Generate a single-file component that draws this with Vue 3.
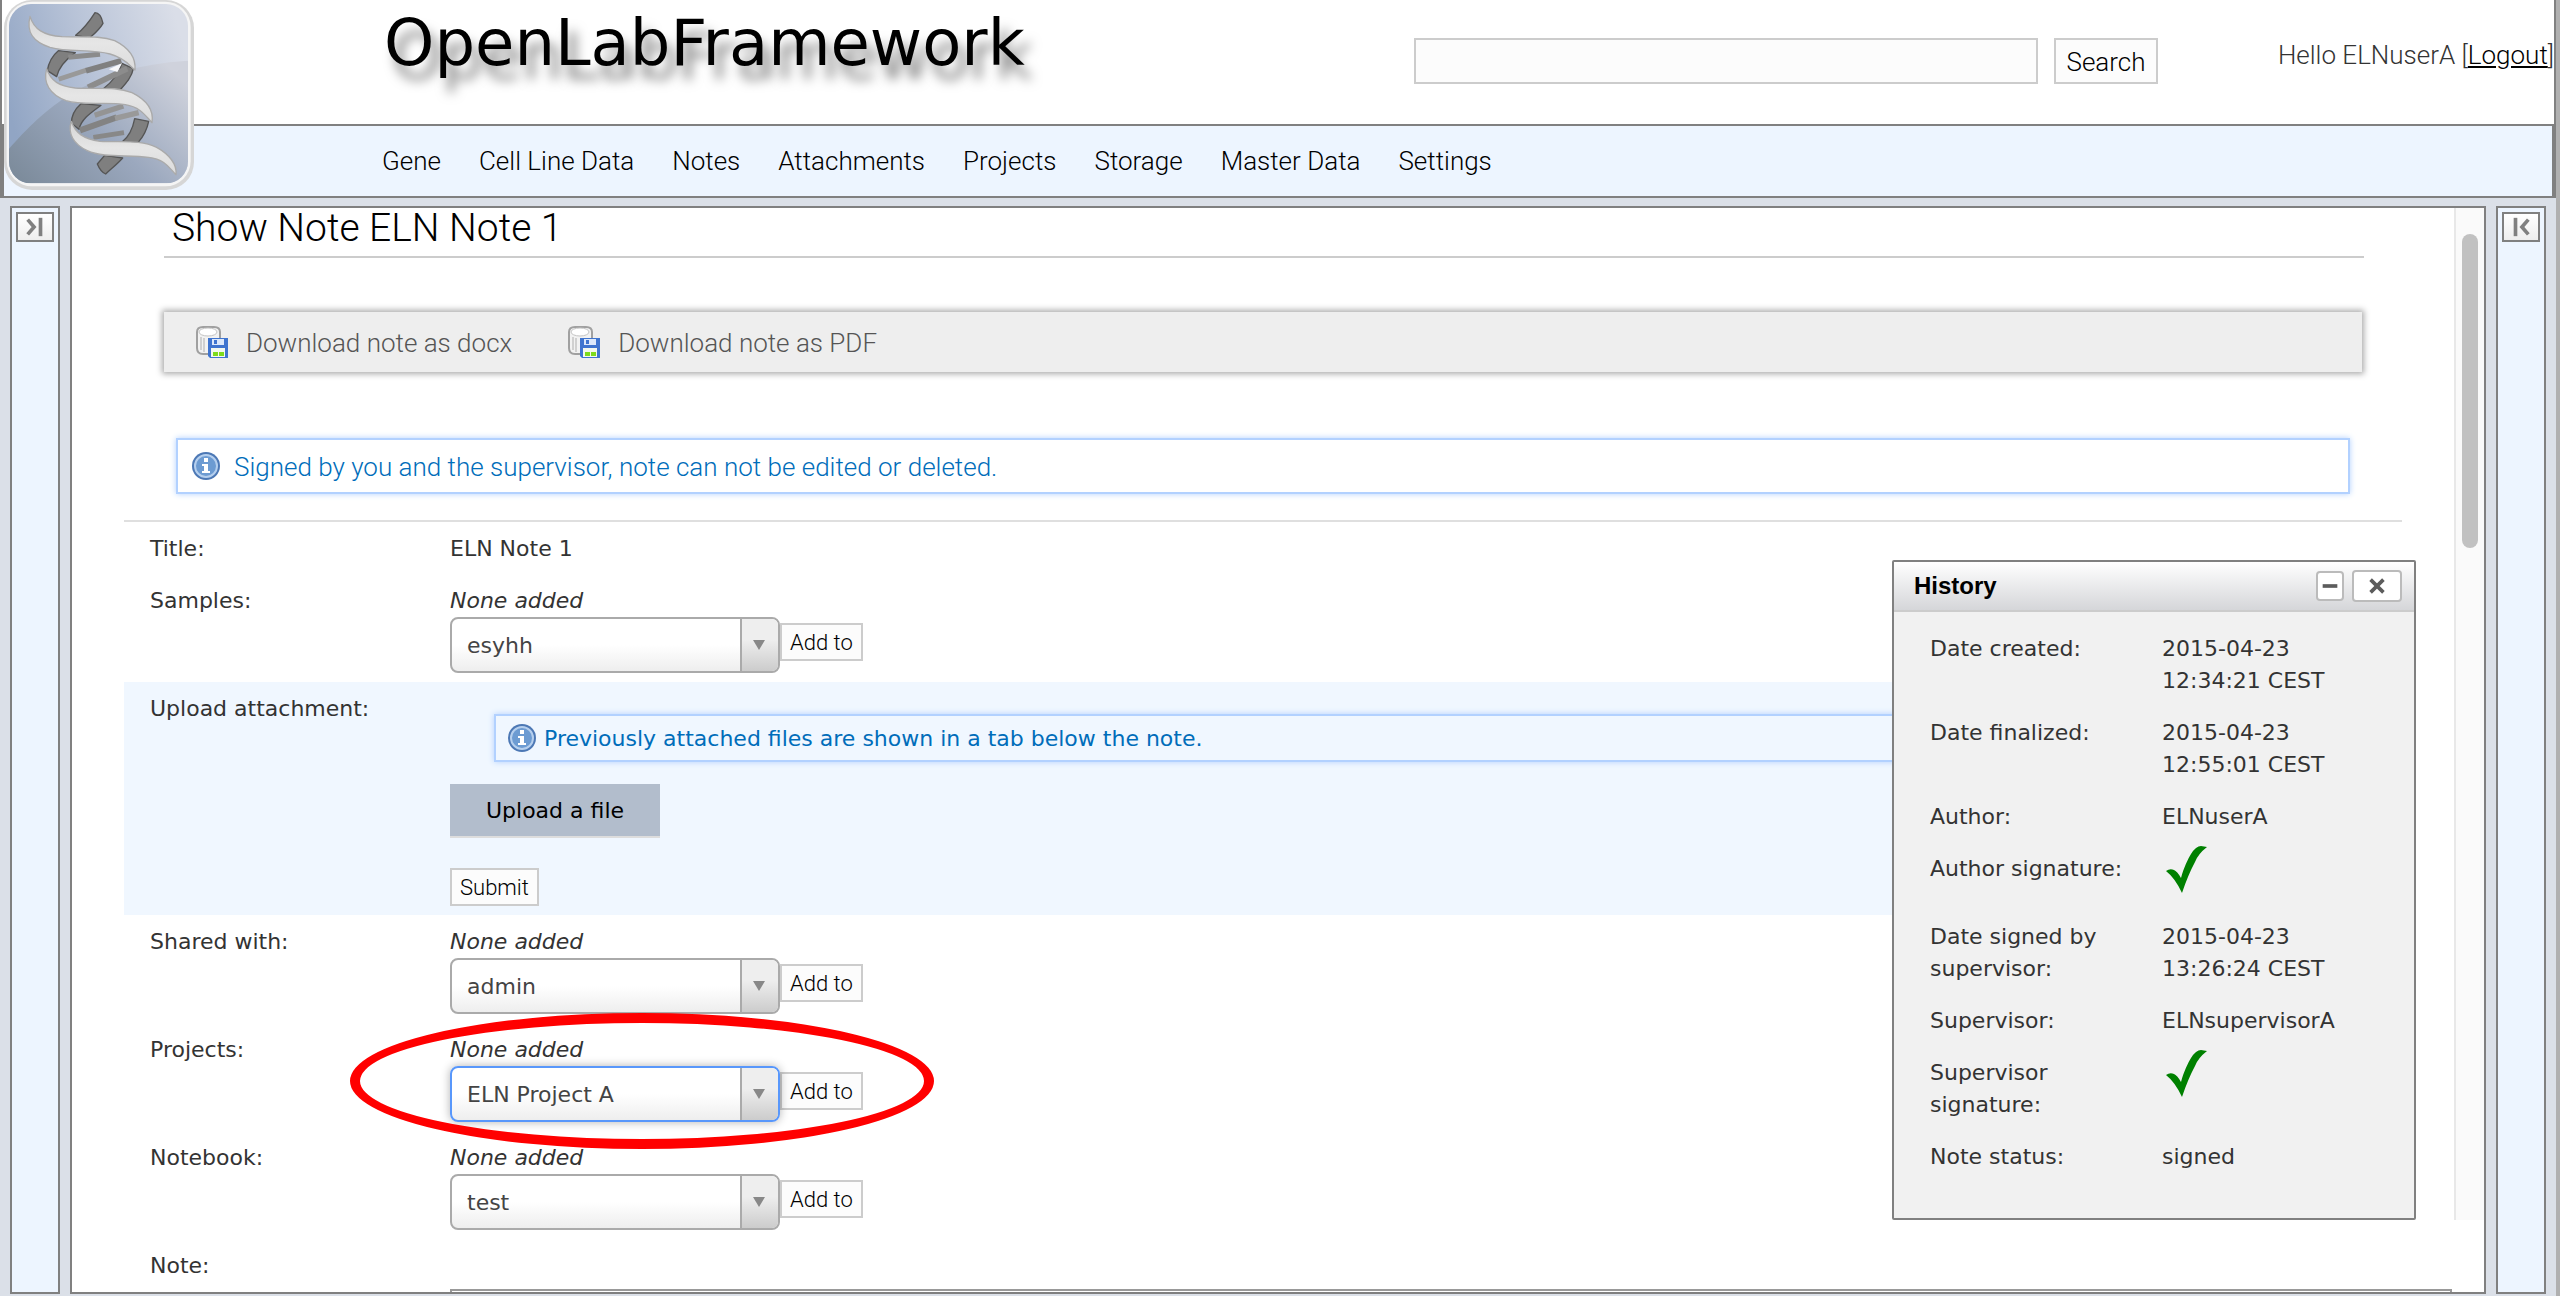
<script setup>
import { ref } from 'vue';

const menu = ['Gene', 'Cell Line Data', 'Notes', 'Attachments', 'Projects', 'Storage', 'Master Data', 'Settings'];

const downloads = ['Download note as docx', 'Download note as PDF'];

// Rows above and below the attachment row share the same picker layout
const samples = [{ id: 'samples', label: 'Samples:', value: 'esyhh' }];
const links = [
  { id: 'shared', label: 'Shared with:', value: 'admin' },
  { id: 'projects', label: 'Projects:', value: 'ELN Project A', active: true },
  { id: 'notebook', label: 'Notebook:', value: 'test' },
];

const history = [
  { label: 'Date created:', value: '2015-04-23 12:34:21 CEST' },
  { label: 'Date finalized:', value: '2015-04-23 12:55:01 CEST' },
  { label: 'Author:', value: 'ELNuserA' },
  { label: 'Author signature:', check: true },
  { label: 'Date signed by supervisor:', value: '2015-04-23 13:26:24 CEST' },
  { label: 'Supervisor:', value: 'ELNsupervisorA' },
  { label: 'Supervisor signature:', check: true },
  { label: 'Note status:', value: 'signed' },
];

const query = ref('');
</script>

<template>
  <div class="app">
    <header class="header">
      <div class="banner">
        <h1 class="brand">OpenLabFramework</h1>
        <form class="search" @submit.prevent>
          <input v-model="query" type="text" class="search-input" aria-label="Search" />
          <button type="submit" class="search-button">Search</button>
        </form>
        <div class="user">Hello ELNuserA [<a href="#">Logout</a>]</div>
      </div>
      <nav class="menu">
        <a v-for="item in menu" :key="item" href="#">{{ item }}</a>
      </nav>
      <svg class="logo" viewBox="0 0 600 600" aria-hidden="true">
        <defs>
          <linearGradient id="tile" x1="0" y1="0.6" x2="1" y2="0.3">
            <stop offset="0" stop-color="#91a5c4" />
            <stop offset="0.5" stop-color="#b9c4d8" />
            <stop offset="1" stop-color="#dadee8" />
          </linearGradient>
          <linearGradient id="hill" x1="0" y1="0.9" x2="1" y2="0.2">
            <stop offset="0" stop-color="#7c8b9b" />
            <stop offset="0.5" stop-color="#9ba8be" />
            <stop offset="1" stop-color="#cfd2dc" />
          </linearGradient>
          <linearGradient id="strand" x1="0" y1="0" x2="0" y2="1">
            <stop offset="0" stop-color="#d6d6d6" />
            <stop offset="0.5" stop-color="#e6e6e6" />
            <stop offset="1" stop-color="#dcdcdc" />
          </linearGradient>
          <clipPath id="tile-clip"><rect x="27" y="12" width="537" height="538" rx="66" /></clipPath>
        </defs>
        <rect x="12" y="0" width="570" height="570" rx="84" fill="#d6d6d6" />
        <rect x="20" y="5" width="552" height="554" rx="76" fill="#f5f5f5" />
        <g clip-path="url(#tile-clip)">
          <rect x="27" y="12" width="537" height="538" fill="url(#tile)" />
          <path d="M27 446C130 330 260 200 564 182V550H27Z" fill="url(#hill)" />
        </g>
        <!-- back strand -->
        <g fill="#7f7f7f" stroke="#555" stroke-width="4" stroke-linejoin="round">
          <path d="M227 106C252 86 270 62 285 38Q302 38 309 70C298 90 280 104 268 114Z" />
          <path d="M175 152C158 166 146 186 142 212L170 230C176 204 198 178 226 158Z" />
          <path d="M400 206C395 232 378 250 360 270L310 266C336 246 356 222 366 190Z" />
          <path d="M243 311C226 326 214 344 214 370L237 388C244 356 276 336 303 316Z" />
          <path d="M446 364C440 394 428 412 414 428L366 426C388 410 398 388 404 356Z" />
          <path d="M314 466L292 492Q302 516 317 522C334 506 352 492 368 474Z" />
        </g>
        <!-- rungs -->
        <g fill="none" stroke-linecap="butt">
          <path d="M205 172L300 163" stroke="#8b8b8b" stroke-width="15" />
          <path d="M176 238L260 210" stroke="#999" stroke-width="14" />
          <path d="M258 212L364 182" stroke="#808080" stroke-width="17" />
          <path d="M264 262L382 206" stroke="#8c8c8c" stroke-width="17" />
          <path d="M326 208L366 190L352 216Z" fill="#f7f8fb" />
          <path d="M284 346L370 318" stroke="#949494" stroke-width="16" />
          <path d="M240 391L350 352" stroke="#838383" stroke-width="18" />
          <path d="M345 355L416 338" stroke="#999" stroke-width="16" />
          <path d="M280 412L372 398" stroke="#888" stroke-width="14" />
        </g>
        <!-- front strand -->
        <g fill="url(#strand)" stroke="#aaa" stroke-width="4" stroke-linejoin="round">
          <path d="M90 49C102 88 130 106 186 110C250 112 300 106 344 122C388 144 408 176 405 210C392 202 380 176 330 162C270 146 210 158 150 142C100 126 78 98 90 49Z" />
          <path d="M140 206C152 244 178 258 226 264C290 268 346 258 396 278C440 300 462 330 456 368C438 350 424 322 376 314C320 304 250 318 198 302C150 284 128 250 140 206Z" />
          <path d="M214 364C226 400 250 416 300 424C364 428 420 418 470 442C506 462 532 492 528 524C510 508 498 478 446 472C380 464 310 474 262 452C220 432 202 400 214 364Z" />
        </g>
      </svg>
    </header>

    <div class="workspace">
      <aside class="side left">
        <button type="button" class="toggle" aria-label="Expand left panel">
          <svg viewBox="0 0 24 24"><path d="M4 4l7 8-7 8" /><path d="M18 2v20" /></svg>
        </button>
      </aside>

      <main class="main">
        <div class="content">
          <h2 class="title">Show Note ELN Note 1</h2>

          <div class="toolbar">
            <a v-for="item in downloads" :key="item" href="#">
              <svg class="disk" viewBox="0 0 32 32" aria-hidden="true">
                <path d="M1 6Q1 1 7 1h11q6 0 6 5v16q0 6-6 6H7q-6 0-6-6Z" fill="#f2f2f2" stroke="#a0a0a0" stroke-width="2" />
                <ellipse cx="12" cy="6" rx="9" ry="4" fill="#fff" stroke="#c4c4c4" />
                <path d="M5 11v13M8 12v14" stroke="#d0d0d0" stroke-width="2" />
                <path d="M12 12h20v20H14l-2-2Z" fill="#3f74cf" />
                <path d="M16 13h12v6H16Z" fill="#dce8fb" />
                <path d="M18 14h3v4h-3Z" fill="#3f74cf" />
                <path d="M15 22h14v9H15Z" fill="#f4f8ee" />
                <path d="M17 26h5v4h-5zM23 26h5v4h-5z" fill="#7ddb1c" />
              </svg>
              <span>{{ item }}</span>
            </a>
          </div>

          <div class="message signed">
            <svg class="info" viewBox="0 0 28 28" aria-hidden="true">
              <circle cx="14" cy="14" r="14" fill="#4c78b5" />
              <circle cx="14" cy="14" r="11" fill="#6c9bd2" stroke="#b5cfee" stroke-width="2" />
              <path d="M12 6h4v4h-4zM10 12h6v7h2v2h-8v-2h2v-5h-2z" fill="#fff" />
            </svg>
            <span>Signed by you and the supervisor, note can not be edited or deleted.</span>
          </div>

          <div class="details">
            <div class="row">
              <span class="label">Title:</span>
              <div class="value">ELN Note 1</div>
            </div>

            <div v-for="field in samples" :key="field.id" class="row">
              <label class="label" :for="field.id">{{ field.label }}</label>
              <div class="value">
                <em>None added</em>
                <div class="picker">
                  <span class="select">
                    <select :id="field.id"><option>{{ field.value }}</option></select>
                  </span>
                  <button type="button" class="small-button">Add to</button>
                </div>
              </div>
            </div>

            <div class="row shaded">
              <span class="label">Upload attachment:</span>
              <div class="value">
                <div class="message attached">
                  <svg class="info" viewBox="0 0 28 28" aria-hidden="true">
                    <circle cx="14" cy="14" r="14" fill="#4c78b5" />
                    <circle cx="14" cy="14" r="11" fill="#6c9bd2" stroke="#b5cfee" stroke-width="2" />
                    <path d="M12 6h4v4h-4zM10 12h6v7h2v2h-8v-2h2v-5h-2z" fill="#fff" />
                  </svg>
                  <span>Previously attached files are shown in a tab below the note.</span>
                </div>
                <button type="button" class="upload">Upload a file</button>
                <button type="submit" class="small-button">Submit</button>
              </div>
            </div>

            <div v-for="field in links" :key="field.id" class="row">
              <label class="label" :for="field.id">{{ field.label }}</label>
              <div class="value">
                <em>None added</em>
                <div class="picker">
                  <span class="select" :class="{ active: field.active }">
                    <select :id="field.id"><option>{{ field.value }}</option></select>
                  </span>
                  <button type="button" class="small-button">Add to</button>
                </div>
              </div>
              <span v-if="field.active" class="highlight"></span>
            </div>

            <div class="row">
              <label class="label" for="note">Note:</label>
              <div class="value note-value">
                <textarea id="note" class="note"></textarea>
              </div>
            </div>
          </div>
        </div>
        <div class="scrollbar"><div class="thumb"></div></div>

        <section class="history">
          <div class="history-header">
            <h3>History</h3>
            <button type="button" class="minimize" aria-label="Minimize">
              <svg viewBox="0 0 24 24"><path d="M4 12h16" /></svg>
            </button>
            <button type="button" class="close" aria-label="Close">
              <svg viewBox="0 0 24 24"><path d="M5 5l14 14M19 5L5 19" /></svg>
            </button>
          </div>
          <dl>
            <div v-for="entry in history" :key="entry.label" class="entry">
              <dt>{{ entry.label }}</dt>
              <dd>
                <svg v-if="entry.check" class="check" viewBox="0 0 48 48" role="img" aria-label="yes">
                  <path d="M4 18Q8 15 12 17Q15 18 19 25C22 14 26 6 29 1Q34 -7 39 -7L45 -6Q36 1 33 9Q26 22 20 40Q13 25 4 18Z" fill="#008000" />
                </svg>
                <template v-else>{{ entry.value }}</template>
              </dd>
            </div>
          </dl>
        </section>
      </main>

      <aside class="side right">
        <button type="button" class="toggle" aria-label="Expand right panel">
          <svg viewBox="0 0 24 24"><path d="M20 4l-7 8 7 8" /><path d="M6 2v20" /></svg>
        </button>
      </aside>
    </div>
  </div>
</template>

<style>
body {
  margin: 0;
  background: #b0b0b0;
}
</style>

<style scoped>
.app {
  --line: #808080;
  --thin: Roboto, "Liberation Sans", sans-serif;
  --wide: "DejaVu Sans", Verdana, sans-serif;
  display: flex;
  flex-direction: column;
  box-sizing: border-box;
  height: 100vh;
  margin-right: 4px;
  overflow: hidden;
  background: #dbe0e8;
  color: #333;
  font-family: var(--wide);
  font-size: 22px;
  line-height: 32px;
}

.app button,
.app input,
.app select,
.app textarea {
  box-sizing: border-box;
  margin: 0;
  padding: 0;
  border-radius: 0;
}

.header {
  position: relative;
  border-left: 2px solid var(--line);
  border-right: 2px solid var(--line);
}

.logo {
  position: absolute;
  top: 0;
  left: -2px;
  width: 200px;
  height: 200px;
}

.banner {
  display: flex;
  align-items: flex-start;
  height: 124px;
  background: #fff;
}

.brand {
  flex: 1;
  margin: 0;
  padding-left: 382px;
  color: #000;
  font-size: 64px;
  font-weight: normal;
  line-height: 86px;
  text-shadow: 8px 14px 12px rgba(0, 0, 0, 0.5);
}

.search {
  display: flex;
  gap: 16px;
  margin-top: 38px;
  font-family: var(--thin);
}

.search-input {
  width: 624px;
  height: 46px;
  border: 2px solid #ccc;
  background: #fcfcfc;
  font-size: 26px;
}

.search-button {
  width: 104px;
  height: 46px;
  border: 2px solid #ccc;
  background: #fcfcfc;
  color: #000;
  font-family: var(--thin);
  font-size: 26px;
  font-weight: 300;
}

.app .search-button {
  padding-top: 2px;
}

.user {
  width: 396px;
  padding-top: 39px;
  font-family: var(--thin);
  font-size: 26px;
  font-weight: 300;
  text-align: right;
}

.user a {
  color: #000;
}

.menu {
  display: flex;
  gap: 38px;
  align-items: center;
  height: 70px;
  padding-left: 378px;
  border: 2px solid var(--line);
  background: #edf5ff;
  font-family: var(--thin);
  font-size: 26px;
  font-weight: 300;
}

.menu a {
  color: #000;
  text-decoration: none;
}

.workspace {
  display: flex;
  flex: 1;
  gap: 10px;
  min-height: 0;
  padding: 8px 10px 2px;
}

.side {
  box-sizing: border-box;
  width: 50px;
  padding: 4px;
  border: 2px solid var(--line);
  background: #edf5ff;
}

.toggle {
  display: flex;
  align-items: center;
  justify-content: center;
  width: 38px;
  height: 30px;
  border: 2px solid var(--line);
  background: linear-gradient(#fff, #eee);
}

.toggle svg {
  width: 22px;
  height: 22px;
  fill: none;
  stroke: #808080;
  stroke-width: 4;
}

.main {
  position: relative;
  display: flex;
  flex: 1;
  min-width: 0;
  overflow: hidden;
  border: 2px solid var(--line);
  background: #fff;
}

.content {
  flex: 1;
  min-width: 0;
  padding: 0 52px;
}

.title {
  margin: 0 38px 54px 40px;
  padding: 0 8px 8px;
  border-bottom: 2px solid #ccc;
  color: #000;
  font-family: var(--thin);
  font-size: 39px;
  font-weight: 300;
  line-height: 40px;
}

.toolbar {
  display: flex;
  gap: 56px;
  align-items: center;
  height: 60px;
  margin: 0 40px 66px;
  padding-left: 32px;
  background: #eee;
  box-shadow: 0 0 6px 2px #aaa;
  font-family: var(--thin);
  font-size: 26px;
  font-weight: 300;
}

.toolbar a {
  display: flex;
  gap: 18px;
  align-items: center;
  color: #555;
  text-decoration: none;
}

.toolbar span,
.message span {
  padding-top: 2px;
}

.disk {
  width: 32px;
  height: 32px;
}

.message {
  display: flex;
  align-items: center;
  box-sizing: border-box;
  border: 2px solid #b2d1ff;
  box-shadow: 0 0 6px #b2d1ff;
  color: #006dba;
}

.info {
  flex: none;
  width: 28px;
  height: 28px;
}

.signed {
  gap: 14px;
  height: 56px;
  margin: 0 52px 26px;
  padding-left: 14px;
  font-family: var(--thin);
  font-size: 26px;
  font-weight: 300;
}

.attached {
  gap: 8px;
  height: 48px;
  margin: 21px 0 22px 44px;
  padding-left: 12px;
}

.details {
  border-top: 2px solid #dfdfdf;
}

.row {
  position: relative;
  display: flex;
  padding: 11px 26px 9px;
}

.shaded {
  background: #f0f7ff;
}

.label {
  flex: none;
  width: 300px;
}

.value {
  flex: 1;
  min-width: 0;
}

.value em {
  display: block;
}

.picker {
  display: flex;
  align-items: flex-start;
}

.picker .small-button {
  margin-top: 6px;
}

.select {
  position: relative;
  width: 330px;
  height: 56px;
}

.select select {
  width: 100%;
  height: 100%;
  padding: 0 60px 0 15px;
  border: 2px solid #aaa;
  border-radius: 8px;
  background: linear-gradient(#fff 50%, #eee);
  color: #444;
  font-family: var(--wide);
  font-size: 22px;
  appearance: none;
}

.select::before {
  content: "";
  position: absolute;
  top: 2px;
  right: 2px;
  bottom: 2px;
  width: 36px;
  border-left: 2px solid #aaa;
  border-radius: 0 6px 6px 0;
  background: linear-gradient(#eee 40%, #ccc);
  pointer-events: none;
}

.select::after {
  content: "";
  position: absolute;
  top: 23px;
  right: 15px;
  border: 6px solid transparent;
  border-top: 10px solid #888;
  border-bottom: 0;
  pointer-events: none;
}

.select.active select {
  border-color: #5897fb;
  box-shadow: 0 0 10px rgba(0, 0, 0, 0.3);
}

.small-button {
  height: 38px;
  border: 2px solid #ccc;
  background: #fcfcfc;
  color: #000;
  font-family: var(--thin);
  font-size: 22px;
  font-weight: 300;
}

.app .small-button {
  padding: 0 8px;
}

.upload {
  display: block;
  width: 210px;
  height: 54px;
  border: 0;
  border-bottom: 2px solid #ddd;
  background: #b2bdcc;
  color: #000;
  font-family: var(--wide);
  font-size: 22px;
}

.app .upload {
  margin-bottom: 30px;
}

.highlight {
  position: absolute;
  top: -10px;
  left: 226px;
  box-sizing: border-box;
  width: 584px;
  height: 136px;
  border: 10px solid #f00;
  border-radius: 50%;
  pointer-events: none;
}

.note-value {
  margin-right: -76px;
  padding-top: 39px;
}

.note {
  display: block;
  width: 100%;
  height: 200px;
  border: 2px solid #999;
}

.scrollbar {
  box-sizing: border-box;
  width: 30px;
  margin-bottom: 72px;
  padding: 26px 6px;
  border-left: 2px solid #e8e8e8;
  background: #fafafa;
}

.thumb {
  width: 16px;
  height: 314px;
  border-radius: 8px;
  background: #c1c1c1;
}

.history {
  position: absolute;
  top: 352px;
  right: 68px;
  box-sizing: border-box;
  width: 524px;
  border: 2px solid var(--line);
  border-radius: 2px;
  background: #f1f1f1;
}

.history-header {
  display: flex;
  gap: 8px;
  align-items: center;
  height: 48px;
  padding: 0 12px 0 20px;
  border-bottom: 2px solid #ccc;
  background: linear-gradient(#fff, #d5d6d9);
}

.history-header h3 {
  flex: 1;
  margin: 0;
  color: #000;
  font-family: "Liberation Sans", sans-serif;
  font-size: 24px;
}

.history-header button {
  display: flex;
  align-items: center;
  justify-content: center;
  width: 50px;
  height: 32px;
  border: 2px solid #bbb;
  border-radius: 4px;
  background: #fff;
}

.history-header .minimize {
  width: 28px;
  height: 30px;
}

.history-header svg {
  flex: none;
  width: 22px;
  height: 22px;
  fill: none;
  stroke: #5c5c5c;
  stroke-width: 4;
}

.history dl {
  margin: 0;
  padding: 10px 36px 36px;
}

.entry {
  display: flex;
  padding: 11px 0 9px;
}

.entry dt {
  width: 200px;
  margin-right: 32px;
}

.entry dd {
  flex: 1;
  margin: 0;
}

.check {
  display: block;
  width: 48px;
  height: 48px;
  overflow: visible;
}
</style>
